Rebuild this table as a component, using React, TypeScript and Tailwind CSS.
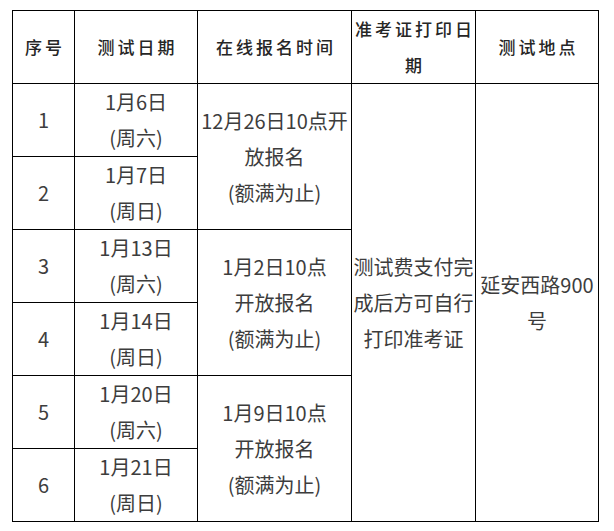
const ROWS = [
  { no: '1', date: '1月6日', week: '(周六)' },
  { no: '2', date: '1月7日', week: '(周日)' },
  { no: '3', date: '1月13日', week: '(周六)' },
  { no: '4', date: '1月14日', week: '(周日)' },
  { no: '5', date: '1月20日', week: '(周六)' },
  { no: '6', date: '1月21日', week: '(周日)' },
]

const SIGNUP = [
  ['12月26日10点开', '放报名', '(额满为止)'],
  ['1月2日10点', '开放报名', '(额满为止)'],
  ['1月9日10点', '开放报名', '(额满为止)'],
]

const rowStart = ['row-start-2', 'row-start-3', 'row-start-4', 'row-start-5', 'row-start-6', 'row-start-7']
const signupStart = ['row-start-2', 'row-start-4', 'row-start-6']

function Head({ children }: { children: React.ReactNode }) {
  return (
    <div className="bg-white flex items-center justify-center text-center whitespace-nowrap text-[17px] leading-[36px] tracking-[3px] pl-[3px] font-medium text-[#262626]">
      <div>{children}</div>
    </div>
  )
}

export default function App() {
  return (
    <div
      className="min-h-screen bg-white pt-[10px] pl-[12px]"
      style={{ fontFamily: '"Noto Sans CJK SC", "Noto Sans", sans-serif' }}
    >
      <div className="inline-grid grid-cols-[61px_122px_153px_123px_122px] grid-rows-[repeat(7,72px)] gap-px p-px bg-black text-[20px] leading-[36px] text-[#3d3d3d]">
        <Head>序号</Head>
        <Head>测试日期</Head>
        <Head>在线报名时间</Head>
        <Head>准考证打印日<br />期</Head>
        <Head>测试地点</Head>

        {ROWS.map((r, i) => (
          <div key={'n' + r.no} className={`bg-white col-start-1 ${rowStart[i]} flex items-center justify-center`}>
            {r.no}
          </div>
        ))}
        {ROWS.map((r, i) => (
          <div key={'d' + r.no} className={`bg-white col-start-2 ${rowStart[i]} flex flex-col items-center justify-center`}>
            <div>{r.date}</div>
            <div>{r.week}</div>
          </div>
        ))}
        {SIGNUP.map((lines, i) => (
          <div key={'s' + i} className={`bg-white col-start-3 ${signupStart[i]} row-span-2 flex flex-col items-center justify-center text-center whitespace-nowrap`}>
            {lines.map(l => <div key={l}>{l}</div>)}
          </div>
        ))}
        <div className="bg-white col-start-4 row-start-2 row-span-6 flex flex-col items-center justify-center whitespace-nowrap">
          <div>测试费支付完</div>
          <div>成后方可自行</div>
          <div>打印准考证</div>
        </div>
        <div className="bg-white col-start-5 row-start-2 row-span-6 flex flex-col items-center justify-center whitespace-nowrap">
          <div>延安西路900</div>
          <div>号</div>
        </div>
      </div>
    </div>
  )
}
